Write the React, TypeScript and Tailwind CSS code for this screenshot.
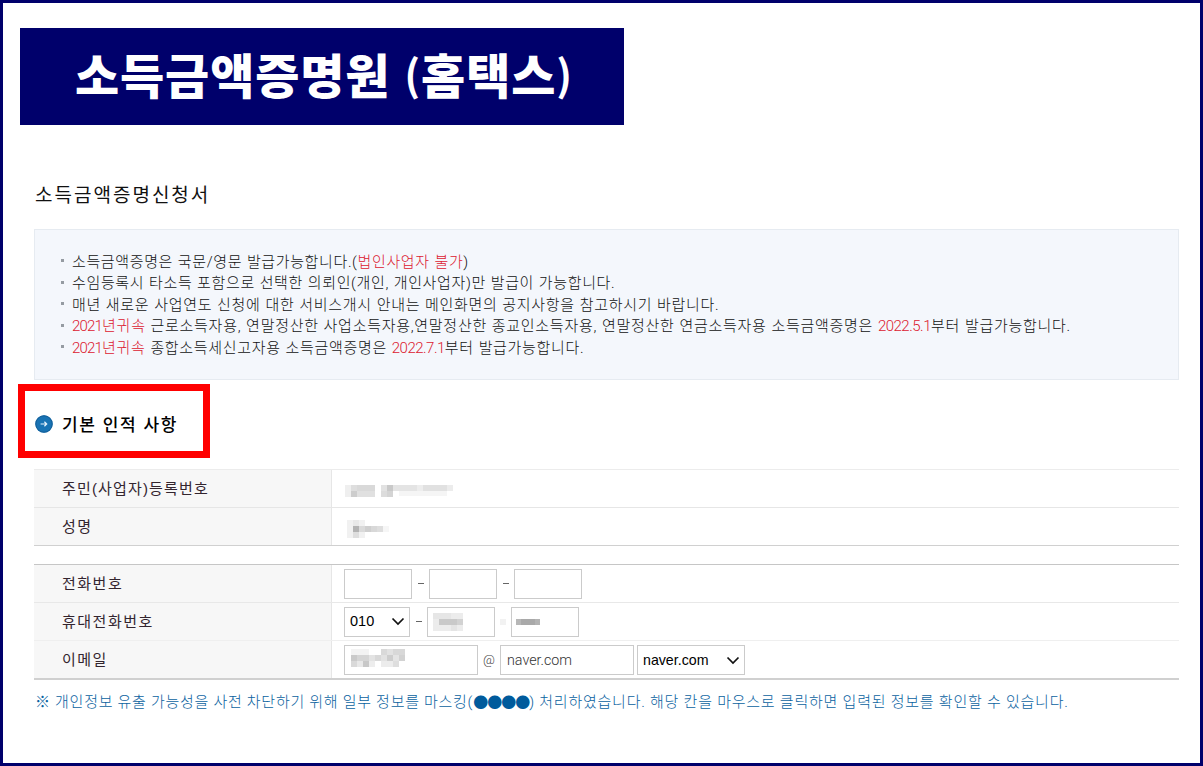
import type { ReactNode } from "react";

type Cell = [number, number, number, number, string];

function Mosaic({ width, height, cells, className = "" }: { width: number; height: number; cells: Cell[]; className?: string }) {
    return (
        <svg width={width} height={height} viewBox={`0 0 ${width} ${height}`} className={`shrink-0 ${className}`} shapeRendering="crispEdges">
            {cells.map(([x, y, w, h, fill], i) => (
                <rect key={i} x={x} y={y} width={w} height={h} fill={fill} />
            ))}
        </svg>
    );
}

const idCells: Cell[] = [
    [0, 0, 6, 12, "#efefef"], [6, 0, 6, 6, "#dedede"], [12, 0, 18, 6, "#d9d9d9"], [6, 6, 6, 6, "#cdcdcd"], [12, 6, 18, 6, "#e0e0e0"],
    [36, 0, 6, 6, "#e2e2e2"], [42, 0, 6, 6, "#c9c9c9"], [36, 6, 6, 6, "#dcdcdc"], [42, 6, 6, 6, "#d4d4d4"],
    [48, 0, 24, 6, "#e4e4e4"], [72, 0, 6, 6, "#ededed"], [78, 0, 24, 6, "#e1e1e1"], [102, 0, 6, 6, "#ececec"],
    [54, 6, 48, 5, "#f5f5f5"],
];

const nameCells: Cell[] = [
    [0, 0, 18, 18, "#f1f1f1"], [6, 0, 6, 6, "#e8e8e8"], [6, 6, 6, 6, "#b3b3b3"], [12, 6, 6, 6, "#dadada"], [6, 12, 6, 6, "#dedede"],
    [18, 6, 6, 6, "#cfcfcf"], [24, 6, 6, 6, "#d8d8d8"], [30, 6, 6, 6, "#dedede"], [36, 6, 6, 6, "#f6f6f6"],
];

const middleCells: Cell[] = [
    [0, 0, 30, 18, "#ececec"], [0, 0, 18, 6, "#e6e6e6"], [6, 6, 18, 6, "#c9c9c9"], [24, 6, 6, 6, "#d2d2d2"], [18, 12, 6, 6, "#e4e4e4"],
];

const lastCells: Cell[] = [
    [0, 0, 5, 6, "#b7b7b7"], [5, 0, 14, 6, "#a9a9a9"], [19, 0, 5, 6, "#b3b3b3"],
];

const mailCells: Cell[] = [
    [0, 0, 18, 6, "#f3f3f3"], [30, 0, 6, 6, "#d9d9d9"], [36, 0, 6, 6, "#e2e2e2"], [42, 0, 12, 6, "#d8d8d8"],
    [0, 6, 6, 6, "#cacaca"], [6, 6, 12, 6, "#d5d5d5"], [18, 6, 6, 6, "#e3e3e3"], [24, 6, 6, 6, "#d8d8d8"], [30, 6, 6, 6, "#e2e2e2"],
    [36, 6, 6, 6, "#cdcdcd"], [42, 6, 6, 6, "#e4e4e4"], [48, 6, 6, 6, "#d2d2d2"],
    [0, 12, 6, 6, "#d9d9d9"], [6, 12, 6, 6, "#e8e8e8"], [12, 12, 6, 6, "#c8c8c8"], [18, 12, 6, 6, "#ededed"], [30, 12, 12, 6, "#ececec"], [42, 12, 6, 6, "#dedede"],
];

function Red({ children, className = "" }: { children: ReactNode; className?: string }) {
    return <span className={`text-[#dc2030] ${className}`}>{children}</span>;
}

function Note({ children, className }: { children: ReactNode; className: string }) {
    return (
        <li className="flex h-[21.5px] items-center whitespace-nowrap">
            <span className="mr-[8px] ml-px size-[3px] shrink-0 bg-[#959ba2]" />
            <span className={`pt-[2px] ${className}`}>{children}</span>
        </li>
    );
}

function Row({ label, children, className = "h-[38px]" }: { label: ReactNode; children?: ReactNode; className?: string }) {
    return (
        <div className={`flex ${className}`}>
            <div className="flex w-[298px] shrink-0 items-center border-r border-[#e6e6e6] bg-[#f7f7f7] pt-[2px] pl-[28px] text-[15px] tracking-[1.5px] text-[#33252f]">
                {label}
            </div>
            <div className="flex flex-1 items-center pl-[12px]">{children}</div>
        </div>
    );
}

function Field({ children, className = "" }: { children?: ReactNode; className?: string }) {
    return (
        <div className={`flex h-[30px] shrink-0 items-center border border-[#cbcbcb] bg-white ${className}`}>{children}</div>
    );
}

function Dash() {
    return <span className="flex w-[17px] justify-center"><span className="h-px w-[6px] bg-[#666]" /></span>;
}

function Chevron() {
    return (
        <svg width="14" height="9" viewBox="0 0 14 9" fill="none" stroke="#111" strokeWidth="1.7">
            <path d="M1.5 1.5L7 7L12.5 1.5" />
        </svg>
    );
}

export default function App() {
    return (
        <main className="h-[766px] w-[1203px] overflow-hidden border-[3px] border-[#00006b] bg-white pt-[25px] font-['Liberation_Sans','Noto_Sans_CJK_KR',sans-serif]">
            <h1 className="ml-[17px] flex h-[97px] w-[604px] items-center whitespace-nowrap bg-[#00006b] pb-[7px] pl-[55px] font-['Noto_Sans_CJK_KR',sans-serif] text-[48px] font-black tracking-[0.9px] text-white">
                <span>소득금액증명원 <span className="ml-[2px] align-[3px] text-[42px] font-bold">(</span>홈택스<span className="align-[3px] text-[42px] font-bold">)</span></span>
            </h1>

            <div className="ml-[31px] w-[1145px]">
                <h2 className="mt-[57px] ml-px h-[28px] text-[19px] leading-[28px] tracking-[2px] text-[#111]">소득금액증명신청서</h2>

                <ul className="mt-[19px] h-[151px] border border-[#e6ebf1] bg-[#f4f7fc] pt-[20px] pl-[25px] font-['Roboto','Noto_Sans_CJK_KR',sans-serif] text-[15px] font-light text-[#111]">
                    <Note className="tracking-[0.63px] [word-spacing:0.5px]">소득금액증명은 국문/영문 발급가능합니다.(<Red>법인사업자 불가</Red>)</Note>
                    <Note className="tracking-[0.64px] [word-spacing:0.5px]">수임등록시 타소득 포함으로 선택한 의뢰인(개인, 개인사업자)만 발급이 가능합니다.</Note>
                    <Note className="tracking-[0.7px] [word-spacing:0.5px]">매년 새로운 사업연도 신청에 대한 서비스개시 안내는 메인화면의 공지사항을 참고하시기 바랍니다.</Note>
                    <Note className="tracking-[0.72px] [word-spacing:0.5px]">
                        <Red><span className="tracking-[-0.8px]">2021</span>년귀속</Red> 근로소득자용, 연말정산한 사업소득자용,연말정산한 종교인소득자용, 연말정산한 연금소득자용 소득금액증명은 <Red className="tracking-[-0.5px]">2022.5.1</Red>부터 발급가능합니다.
                    </Note>
                    <Note className="tracking-[0.68px] [word-spacing:0.5px]">
                        <Red><span className="tracking-[-0.8px]">2021</span>년귀속</Red> 종합소득세신고자용 소득금액증명은 <Red className="tracking-[-0.5px]">2022.7.1</Red>부터 발급가능합니다.
                    </Note>
                </ul>

                <div className="mt-[4px] -ml-[16px] flex h-[74px] w-[192px] items-center border-[7px] border-[#ff0000] pb-px pl-[10px]">
                    <svg width="18" height="18" viewBox="0 0 18 18" className="mt-[6px]">
                        <circle cx="9" cy="9" r="8.7" fill="#1873b4" />
                        <circle cx="9" cy="9" r="8.2" fill="none" stroke="#155f98" strokeWidth="1" />
                        <path d="M5.6 9H11.6M9.4 6.8L11.7 9L9.4 11.2" fill="none" stroke="#e6f2fb" strokeWidth="1.2" />
                    </svg>
                    <h3 className="mt-[10px] ml-[9px] whitespace-nowrap text-[17px] font-medium tracking-[1.6px] text-black">기본 인적 사항</h3>
                </div>

                <section className="mt-[11px] border-t border-[#ececec]">
                    <Row label={<span className="tracking-[1.15px]">주민(사업자)등록번호</span>} className="h-[38px] border-b border-[#e6e6e6]">
                        <Mosaic width={108} height={12} cells={idCells} className="mt-[5px] ml-[1px]" />
                    </Row>
                    <Row label="성명" className="h-[38px] border-b border-[#d0d0d0]">
                        <Mosaic width={42} height={18} cells={nameCells} className="mt-[5px] ml-[3px]" />
                    </Row>
                </section>

                <section className="mt-[18px] border-t border-[#c6c6c6]">
                    <Row label="전화번호" className="h-[38px] border-b border-[#e8e8e8]">
                        <Field className="w-[68px]" />
                        <Dash />
                        <Field className="w-[68px]" />
                        <Dash />
                        <Field className="w-[68px]" />
                    </Row>
                    <Row label="휴대전화번호" className="h-[38px] border-b border-[#efefef]">
                        <Field className="w-[66px] justify-between pr-[4px] pl-[5px] text-[14.5px] text-black">010<Chevron /></Field>
                        <Dash />
                        <Field className="w-[68px] pl-[5px]">
                            <Mosaic width={30} height={18} cells={middleCells} />
                        </Field>
                        <span className="flex w-[16px] justify-center"><span className="size-[6px] bg-[#f2f2f2]" /></span>
                        <Field className="w-[68px] pl-[4px]">
                            <Mosaic width={24} height={6} cells={lastCells} />
                        </Field>
                    </Row>
                    <Row label="이메일" className="h-[39px] border-b-2 border-[#d0d0d0]">
                        <Field className="mt-px w-[134px] pl-[6px]">
                            <Mosaic width={54} height={18} cells={mailCells} className="-mt-[4px]" />
                        </Field>
                        <span className="w-[22px] pl-[5px] font-['Roboto',sans-serif] text-[13px] font-light text-[#444]">@</span>
                        <Field className="mt-px w-[134px] pt-px pl-[6px] font-['Roboto',sans-serif] text-[14.3px] font-light text-[#333]">naver.com</Field>
                        <Field className="mt-px ml-[3px] w-[108px] justify-between pt-px pr-[4px] pl-[5px] text-[14.2px] text-black">naver.com<Chevron /></Field>
                    </Row>
                </section>

                <p className="mt-[10px] ml-px flex h-[24px] items-center whitespace-nowrap font-['Roboto','Noto_Sans_CJK_KR',sans-serif] text-[15px] font-light text-[#0a62a0]">
                    <span className="tracking-[0.72px]">※ 개인정보 유출 가능성을 사전 차단하기 위해 일부 정보를 마스킹(</span>
                    <span className="font-['Noto_Sans_CJK_KR',sans-serif] tracking-[-1px] text-[#005b9c]">●●●●</span>
                    <span className="tracking-[0.77px]">) 처리하였습니다. 해당 칸을 마우스로 클릭하면 입력된 정보를 확인할 수 있습니다.</span>
                </p>
            </div>
        </main>
    );
}
